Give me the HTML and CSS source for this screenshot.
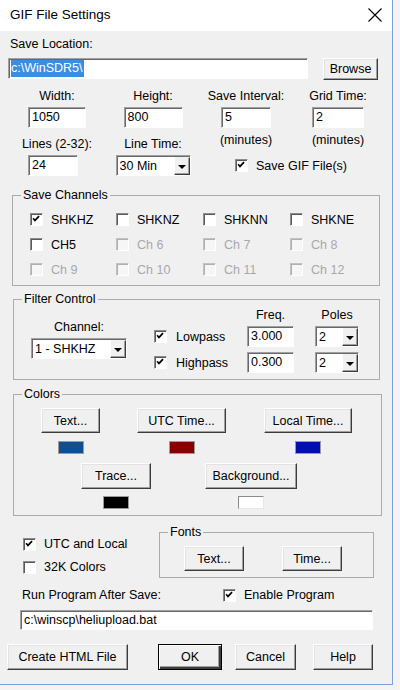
FILE: index.html
```html
<!DOCTYPE html>
<html lang="en">
<head>
    <meta charset="UTF-8">
    <meta name="viewport" content="width=device-width, initial-scale=1.0">
    <title>GIF File Settings</title>
    <link rel="stylesheet" href="styles.css">
</head>
<body>

<div class="dialog">
    <div class="titlebar">
        <span class="title">GIF File Settings</span>
        <svg class="close" width="14" height="14" viewBox="0 0 14 14">
            <path d="M0.5 0.5L13.5 13.5M13.5 0.5L0.5 13.5" stroke="#000" stroke-width="1.1" fill="none"/>
        </svg>
    </div>

    <div class="content">
        <div class="save-label">Save Location:</div>
        <div class="path-row">
            <div class="field path"><span class="selected">c:\WinSDR5\</span></div>
            <button class="btn browse">Browse</button>
        </div>

        <div class="size-grid">
            <div class="cap">Width:</div>
            <div class="cap">Height:</div>
            <div class="cap">Save Interval:</div>
            <div class="cap">Grid Time:</div>

            <div class="field w-width">1050</div>
            <div class="field w-height">800</div>
            <div class="field w-interval">5</div>
            <div class="field w-grid">2</div>

            <div class="cap low">Lines (2-32):</div>
            <div class="cap low">Line Time:</div>
            <div class="cap high">(minutes)</div>
            <div class="cap high">(minutes)</div>

            <div class="field w-lines">24</div>
            <div class="combo w-linetime"><span class="combo-text">30 Min</span><span class="drop"></span></div>
            <div class="check save-gif"><span class="box"><svg viewBox="0 0 13 13"><path d="M2.5 5l2.2 2.6 4.8-5"/></svg></span>Save GIF File(s)</div>
        </div>

        <fieldset class="group channels">
            <legend>Save Channels</legend>
            <div class="channel-grid">
                <div class="check"><span class="box"><svg viewBox="0 0 13 13"><path d="M2.5 5l2.2 2.6 4.8-5"/></svg></span>SHKHZ</div>
                <div class="check"><span class="box"></span>SHKNZ</div>
                <div class="check"><span class="box"></span>SHKNN</div>
                <div class="check"><span class="box"></span>SHKNE</div>
                <div class="check"><span class="box"></span>CH5</div>
                <div class="check off"><span class="box"></span>Ch 6</div>
                <div class="check off"><span class="box"></span>Ch 7</div>
                <div class="check off"><span class="box"></span>Ch 8</div>
                <div class="check off"><span class="box"></span>Ch 9</div>
                <div class="check off"><span class="box"></span>Ch 10</div>
                <div class="check off"><span class="box"></span>Ch 11</div>
                <div class="check off"><span class="box"></span>Ch 12</div>
            </div>
        </fieldset>

        <fieldset class="group filter">
            <legend>Filter Control</legend>
            <div class="filter-body">
                <div class="col-channel">
                    <div class="cap">Channel:</div>
                    <div class="combo w-channel"><span class="combo-text">1 - SHKHZ</span><span class="drop"></span></div>
                </div>
                <div class="col-pass">
                    <div class="check"><span class="box"><svg viewBox="0 0 13 13"><path d="M2.5 5l2.2 2.6 4.8-5"/></svg></span>Lowpass</div>
                    <div class="check"><span class="box"><svg viewBox="0 0 13 13"><path d="M2.5 5l2.2 2.6 4.8-5"/></svg></span>Highpass</div>
                </div>
                <div class="col-freq">
                    <div class="cap">Freq.</div>
                    <div class="field">3.000</div>
                    <div class="field">0.300</div>
                </div>
                <div class="col-poles">
                    <div class="cap">Poles</div>
                    <div class="combo"><span class="combo-text">2</span><span class="drop"></span></div>
                    <div class="combo"><span class="combo-text">2</span><span class="drop"></span></div>
                </div>
            </div>
        </fieldset>

        <fieldset class="group colors">
            <legend>Colors</legend>
            <div class="color-row first">
                <div class="color-item c-text">
                    <button class="btn">Text...</button>
                    <span class="swatch" style="background: #0f4f8f"></span>
                </div>
                <div class="color-item c-utc">
                    <button class="btn">UTC Time...</button>
                    <span class="swatch" style="background: #880000"></span>
                </div>
                <div class="color-item c-local">
                    <button class="btn">Local Time...</button>
                    <span class="swatch" style="background: #0010b0"></span>
                </div>
            </div>
            <div class="color-row second">
                <div class="color-item c-trace">
                    <button class="btn">Trace...</button>
                    <span class="swatch" style="background: #000"></span>
                </div>
                <div class="color-item c-back">
                    <button class="btn">Background...</button>
                    <span class="swatch white" style="background: #fff"></span>
                </div>
            </div>
        </fieldset>

        <div class="bottom-row">
            <div class="misc-checks">
                <div class="check"><span class="box"><svg viewBox="0 0 13 13"><path d="M2.5 5l2.2 2.6 4.8-5"/></svg></span>UTC and Local</div>
                <div class="check"><span class="box"></span>32K Colors</div>
            </div>
            <fieldset class="group fonts">
                <legend>Fonts</legend>
                <div class="font-buttons">
                    <button class="btn">Text...</button>
                    <button class="btn">Time...</button>
                </div>
            </fieldset>
        </div>

        <div class="run-row">
            <span class="run-label">Run Program After Save:</span>
            <div class="check"><span class="box"><svg viewBox="0 0 13 13"><path d="M2.5 5l2.2 2.6 4.8-5"/></svg></span>Enable Program</div>
        </div>
        <div class="field run-path">c:\winscp\heliupload.bat</div>

        <div class="action-row">
            <button class="btn a-html">Create HTML File</button>
            <button class="btn a-ok">OK</button>
            <button class="btn a-cancel">Cancel</button>
            <button class="btn a-help">Help</button>
        </div>
    </div>
</div>

</body>
</html>
```

FILE: styles.css
```css
html, body {
    margin: 0;
    background-color: #f4f4f4;
}
body {
    font-family: "Liberation Sans", Arial, sans-serif;
    font-size: 12.5px;
    line-height: 14px;
    color: #000;
}
.dialog {
    width: 392px;
    height: 684px;
    background-color: #f0f0f0;
    border-right: 1px solid #76a4dc;
    border-bottom: 1px solid #76a4dc;
    overflow: hidden;
}
.titlebar {
    height: 31px;
    background-color: #fff;
    display: flex;
    align-items: center;
    padding-left: 10px;
    padding-right: 10px;
}
.title {
    font-size: 13.5px;
    flex: 1;
    padding-bottom: 1px;
}
.close {
    display: block;
    margin-top: -2px;
}

/* shared controls */
.field {
    box-sizing: border-box;
    height: 21px;
    background-color: #fff;
    border: 1px solid;
    border-color: #a0a0a0 #fff #fff #a0a0a0;
    box-shadow: inset 1px 1px #696969;
    padding-left: 3px;
    line-height: 19px;
    white-space: nowrap;
    overflow: hidden;
}
.btn {
    box-sizing: border-box;
    font-family: inherit;
    font-size: 12.5px;
    color: #000;
    background-color: #f0f0f0;
    border: 1px solid;
    border-color: #fff #3c3c3c #3c3c3c #fff;
    box-shadow: inset -1px -1px #a0a0a0, inset 1px 1px #e3e3e3;
    padding: 0;
    height: 25px;
    cursor: pointer;
}
.combo {
    box-sizing: border-box;
    height: 21px;
    display: flex;
    background-color: #fff;
    border: 1px solid;
    border-color: #a0a0a0 #fff #fff #a0a0a0;
    box-shadow: inset 1px 1px #696969;
}
.combo-text {
    flex: 1;
    padding-left: 3px;
    padding-top: 1px;
    line-height: 18px;
}
.drop {
    width: 16px;
    margin: 1px 0 0 0;
    box-sizing: border-box;
    background-color: #f0f0f0;
    border: 1px solid;
    border-color: #f0f0f0 #3c3c3c #3c3c3c #fff;
    box-shadow: inset -1px -1px #a0a0a0;
    display: flex;
    align-items: center;
    justify-content: center;
}
.drop::after {
    content: "";
    border-top: 4px solid #000;
    border-left: 4px solid transparent;
    border-right: 4px solid transparent;
    margin-top: 1px;
}
.check {
    display: flex;
    align-items: center;
    gap: 8px;
    white-space: nowrap;
}
.box {
    box-sizing: border-box;
    width: 13px;
    height: 13px;
    flex: none;
    background-color: #fff;
    border: 1px solid;
    border-color: #8c8c8c #fff #fff #8c8c8c;
    box-shadow: inset 1px 1px #5a5a5a;
}
.box svg {
    display: block;
    width: 11px;
    height: 11px;
}
.box path {
    fill: none;
    stroke: #000;
    stroke-width: 2;
}
.check.off {
    color: #a8a8a8;
}
.check.off .box {
    background-color: #f6f6f6;
    border-color: #c2c2c2 #fff #fff #c2c2c2;
    box-shadow: inset 1px 1px #b0b0b0;
}
.group {
    margin: 0;
    padding: 0;
    min-width: 0;
    border: 1px solid #ababab;
}
.group legend {
    margin-left: 8px;
    padding: 0 2px;
    line-height: 14px;
}

/* save location */
.save-label {
    margin: 6px 0 0 10px;
}
.path-row {
    display: flex;
    align-items: flex-start;
    margin-top: 7px;
    height: 22px;
}
.path {
    margin-left: 8px;
    width: 300px;
    padding-left: 2px;
    padding-top: 1px;
    line-height: 17px;
}
.selected {
    display: inline-block;
    background-color: #3b8de4;
    color: #fff;
    padding-right: 1px;
}
.browse {
    margin-left: 15px;
    width: 55px;
    height: 22px;
}

/* size grid */
.size-grid {
    display: grid;
    grid-template-columns: 98px 94px 92px 92px;
    grid-template-rows: 18px 21px 27px 21px;
    margin: 9px 0 0 8px;
}
.size-grid .cap {
    text-align: center;
    align-self: start;
}
.size-grid .field,
.size-grid .combo {
    justify-self: center;
}
.size-grid .cap.low {
    align-self: end;
    margin-bottom: 4px;
}
.size-grid .cap.high {
    margin-top: 5px;
}
.w-width { width: 58px; }
.w-height { width: 59px; }
.w-interval { width: 50px; }
.w-grid { width: 52px; }
.size-grid .w-lines {
    width: 50px;
    justify-self: start;
    margin-left: 20px;
}
.w-linetime { width: 75px; }
.save-gif {
    grid-column: 3 / 5;
    margin-left: 35px;
}

/* save channels */
.channels {
    margin: 12px 0 0 12px;
    width: 366px;
}
.channel-grid {
    display: grid;
    grid-template-columns: 86px 87px 87px auto;
    grid-auto-rows: 25px;
    padding: 5px 0 3px 17px;
}

/* filter control */
.filter {
    margin: 6px 0 0 13px;
    width: 365px;
}
.filter-body {
    display: flex;
    align-items: flex-start;
    padding-bottom: 6px;
}
.col-channel {
    margin-left: 17px;
    width: 96px;
    display: flex;
    flex-direction: column;
    align-items: center;
    padding-top: 14px;
    gap: 4px;
}
.w-channel {
    width: 96px;
}
.col-pass {
    margin-left: 27px;
    width: 93px;
    padding-top: 20px;
    display: flex;
    flex-direction: column;
    gap: 5px;
}
.col-pass .check {
    height: 21px;
    gap: 9px;
}
.col-freq,
.col-poles {
    display: flex;
    flex-direction: column;
    gap: 5px;
    padding-top: 2px;
}
.col-freq {
    width: 47px;
}
.col-poles {
    margin-left: 21px;
    width: 44px;
}
.col-freq .cap,
.col-poles .cap {
    text-align: center;
    margin-bottom: -1px;
}

/* colors */
.colors {
    margin: 7px 0 0 13px;
    width: 367px;
}
.color-row {
    display: flex;
    align-items: flex-start;
}
.color-row.first {
    padding-top: 7px;
}
.color-row.second {
    padding-top: 9px;
    padding-bottom: 6px;
}
.color-item {
    display: flex;
    flex-direction: column;
    align-items: center;
}
.color-row.first .color-item {
    gap: 8px;
}
.color-row.second .color-item {
    gap: 7px;
}
.color-item .btn {
    width: 100%;
}
.color-row.second .btn {
    height: 26px;
}
.c-text { margin-left: 27px; width: 59px; }
.c-utc { margin-left: 37px; width: 89px; }
.c-local { margin-left: 38px; width: 88px; }
.c-trace { margin-left: 67px; width: 70px; }
.c-back { margin-left: 54px; width: 92px; }
.swatch {
    box-sizing: border-box;
    display: block;
    width: 26px;
    height: 13px;
    border: 1px solid #9a9a9a;
}
.swatch.white {
    border-color: #8c8c8c #e8e8e8 #e8e8e8 #8c8c8c;
}

/* fonts and misc */
.bottom-row {
    display: flex;
    align-items: flex-start;
    margin-top: 9px;
}
.misc-checks {
    margin-left: 23px;
    width: 136px;
    padding-top: 8px;
    display: flex;
    flex-direction: column;
    gap: 1px;
}
.misc-checks .check {
    height: 22px;
}
.fonts {
    width: 213px;
}
.font-buttons {
    display: flex;
    padding: 7px 0 6px 24px;
    gap: 38px;
}
.font-buttons .btn {
    width: 60px;
}

/* run program */
.run-row {
    display: flex;
    align-items: center;
    height: 18px;
    margin-top: 8px;
    padding-left: 22px;
}
.run-label {
    width: 201px;
}
.run-path {
    margin: 6px 0 0 20px;
    width: 353px;
    height: 20px;
    line-height: 18px;
}

/* action buttons */
.action-row {
    display: flex;
    margin-top: 14px;
}
.action-row .btn {
    height: 26px;
}
.a-html { margin-left: 7px; width: 121px; }
.a-ok {
    margin-left: 30px;
    width: 64px;
    border-color: #000;
    box-shadow: inset 1px 1px #fff, inset -2px -2px #3c3c3c, inset -3px -3px #a0a0a0;
}
.a-cancel { margin-left: 13px; width: 61px; }
.a-help { margin-left: 17px; width: 60px; }
```
